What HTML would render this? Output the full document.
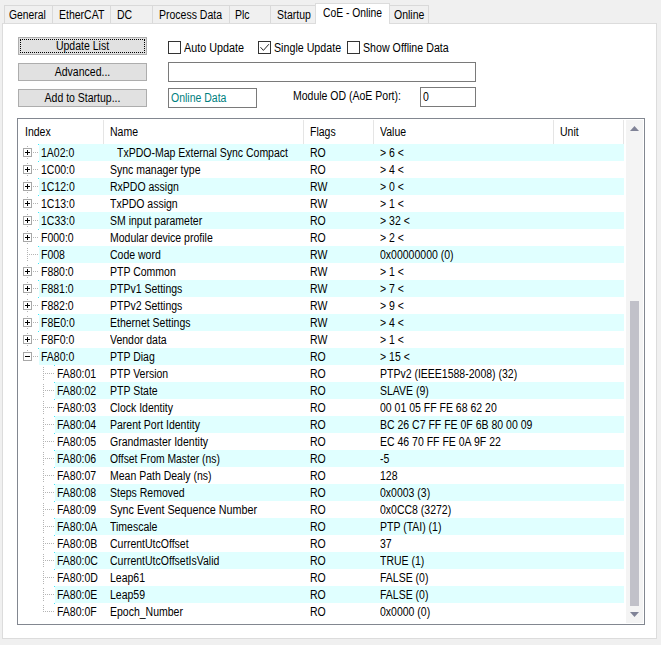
<!DOCTYPE html>
<html><head><meta charset="utf-8"><title>CoE - Online</title>
<style>
html,body{margin:0;padding:0}
body{width:661px;height:645px;background:#f0f0f0;position:relative;overflow:hidden;font-family:"Liberation Sans",sans-serif;font-size:12px;color:#000}
.t{position:absolute;white-space:nowrap;line-height:14px;font-size:12px;transform:scaleX(0.875);transform-origin:0 0}
.panel{position:absolute;left:2px;top:23px;width:655px;height:616px;background:#fff;border:1px solid #dcdcdc;box-sizing:border-box}
.tab{position:absolute;top:5px;height:18px;box-sizing:border-box;background:#f0f0f0;border:1px solid #d9d9d9;border-bottom:none}
.tab.sel{top:3px;height:21px;background:#fff;border-color:#dcdcdc}
.btn{position:absolute;left:18px;width:129px;height:18px;box-sizing:border-box;background:#e1e1e1;border:1px solid #adadad}
.btn span{position:absolute;left:0;right:0;top:1px;text-align:center;line-height:14px;font-size:12px;transform:scaleX(0.875);transform-origin:50% 0;white-space:nowrap}
.cb{position:absolute;top:41px;width:13px;height:13px;box-sizing:border-box;border:1px solid #333;background:#fff}
.inp{position:absolute;box-sizing:border-box;border:1px solid #7a7a7a;background:#fff}
.tbl{position:absolute;left:17px;top:118px;width:628px;height:507px;box-sizing:border-box;border:1px solid #828790;background:#fff}
.cy{position:absolute;height:17px;background:#e0ffff}
.dot{position:absolute;width:1px;height:1px;background:#40e8f8}
.hl{position:absolute;height:1px;background-image:repeating-linear-gradient(90deg,#b4b4b4 0 1px,transparent 1px 2px)}
.vl{position:absolute;width:1px;background-image:repeating-linear-gradient(180deg,#b4b4b4 0 1px,transparent 1px 2px)}
.bx{position:absolute;width:9px;height:9px;box-sizing:border-box;border:1px solid #a8a8a8;background:#fff}
.bx .h{position:absolute;left:1px;top:3px;width:5px;height:1px;background:#000}
.bx .v{position:absolute;left:3px;top:1px;width:1px;height:5px;background:#000}
.sep{position:absolute;top:120px;width:1px;height:24px;background:#e5e5e5}
</style></head><body>
<div class="panel"></div>
<div class="tab" style="left:4px;width:49px"></div>
<div class="tab" style="left:52px;width:59px"></div>
<div class="tab" style="left:110px;width:43px"></div>
<div class="tab" style="left:152px;width:78px"></div>
<div class="tab" style="left:229px;width:42px"></div>
<div class="tab" style="left:270px;width:47px"></div>
<div class="tab" style="left:389px;width:40px"></div>
<div class="tab sel" style="left:315px;width:75px"></div>
<span class="t" style="left:9.2px;top:8px;transform:scaleX(0.86)">General</span>
<span class="t" style="left:59px;top:8px">EtherCAT</span>
<span class="t" style="left:117px;top:8px">DC</span>
<span class="t" style="left:159px;top:8px">Process Data</span>
<span class="t" style="left:235.3px;top:8px">Plc</span>
<span class="t" style="left:277px;top:8px">Startup</span>
<span class="t" style="left:322.5px;top:6px;transform:scaleX(0.86)">CoE - Online</span>
<span class="t" style="left:394px;top:8px">Online</span>

<div class="btn" style="top:37px"><div style="position:absolute;left:1px;top:1px;right:1px;bottom:1px;border:1px dotted #000"></div><span>Update List</span></div>
<div class="btn" style="top:63px"><span>Advanced...</span></div>
<div class="btn" style="top:89px"><span>Add to Startup...</span></div>

<div class="cb" style="left:168px"></div><span class="t" style="left:184px;top:41px;transform:scaleX(0.9)">Auto Update</span>
<div class="cb" style="left:258px"><svg width="11" height="11" viewBox="0 0 11 11" style="position:absolute;left:0;top:0"><path d="M1.5 5.2 L4.4 8.4 L9.9 2.2" fill="none" stroke="#1a1a1a" stroke-width="0.95"/></svg></div><span class="t" style="left:274px;top:41px;transform:scaleX(0.89)">Single Update</span>
<div class="cb" style="left:347px"></div><span class="t" style="left:363px;top:41px;transform:scaleX(0.888)">Show Offline Data</span>

<div class="inp" style="left:168px;top:62px;width:308px;height:20px"></div>
<div class="inp" style="left:168px;top:88px;width:89px;height:20px"></div>
<span class="t" style="left:170.6px;top:91px;color:#008080">Online Data</span>
<span class="t" style="left:293px;top:89px">Module OD (AoE Port):</span>
<div class="inp" style="left:420px;top:87px;width:56px;height:20px"></div>
<span class="t" style="left:423px;top:90px">0</span>

<div class="tbl"></div>
<div class="sep" style="left:103px"></div>
<div class="sep" style="left:303px"></div>
<div class="sep" style="left:373px"></div>
<div class="sep" style="left:553px"></div>
<div class="sep" style="left:623px"></div>
<span class="t" style="left:25px;top:125px">Index</span>
<span class="t" style="left:110px;top:125px">Name</span>
<span class="t" style="left:310px;top:125px">Flags</span>
<span class="t" style="left:380px;top:125px">Value</span>
<span class="t" style="left:560px;top:125px">Unit</span>
<div class="vl" style="left:27px;top:146px;height:13px"></div>
<div class="vl" style="left:27px;top:163px;height:13px"></div>
<div class="vl" style="left:27px;top:180px;height:13px"></div>
<div class="vl" style="left:27px;top:197px;height:13px"></div>
<div class="vl" style="left:27px;top:214px;height:13px"></div>
<div class="vl" style="left:27px;top:231px;height:13px"></div>
<div class="vl" style="left:27px;top:248px;height:13px"></div>
<div class="vl" style="left:27px;top:265px;height:13px"></div>
<div class="vl" style="left:27px;top:282px;height:13px"></div>
<div class="vl" style="left:27px;top:299px;height:13px"></div>
<div class="vl" style="left:27px;top:316px;height:13px"></div>
<div class="vl" style="left:27px;top:333px;height:13px"></div>
<div class="vl" style="left:27px;top:350px;height:7px"></div>
<div class="vl" style="left:43px;top:367px;height:13px"></div>
<div class="vl" style="left:43px;top:384px;height:13px"></div>
<div class="vl" style="left:43px;top:401px;height:13px"></div>
<div class="vl" style="left:43px;top:418px;height:13px"></div>
<div class="vl" style="left:43px;top:435px;height:13px"></div>
<div class="vl" style="left:43px;top:452px;height:13px"></div>
<div class="vl" style="left:43px;top:469px;height:13px"></div>
<div class="vl" style="left:43px;top:486px;height:13px"></div>
<div class="vl" style="left:43px;top:503px;height:13px"></div>
<div class="vl" style="left:43px;top:520px;height:13px"></div>
<div class="vl" style="left:43px;top:537px;height:13px"></div>
<div class="vl" style="left:43px;top:554px;height:13px"></div>
<div class="vl" style="left:43px;top:571px;height:13px"></div>
<div class="vl" style="left:43px;top:588px;height:13px"></div>
<div class="vl" style="left:43px;top:605px;height:7px"></div>
<div class="cy" style="left:39px;top:144px;width:585px"></div>
<div class="dot" style="left:38px;top:144px"></div>
<div class="hl" style="left:33px;top:152px;width:6px"></div>
<div class="bx" style="left:23px;top:148px"><i class="h"></i><i class="v"></i></div>
<span class="t" style="left:41px;top:146px">1A02:0</span>
<span class="t" style="left:117px;top:146px">TxPDO-Map External Sync Compact</span>
<span class="t" style="left:310px;top:146px">RO</span>
<span class="t" style="left:380px;top:146px">&gt; 6 &lt;</span>
<div class="dot" style="left:38px;top:161px"></div>
<div class="hl" style="left:33px;top:169px;width:6px"></div>
<div class="bx" style="left:23px;top:165px"><i class="h"></i><i class="v"></i></div>
<span class="t" style="left:41px;top:163px">1C00:0</span>
<span class="t" style="left:110px;top:163px">Sync manager type</span>
<span class="t" style="left:310px;top:163px">RO</span>
<span class="t" style="left:380px;top:163px">&gt; 4 &lt;</span>
<div class="cy" style="left:39px;top:178px;width:585px"></div>
<div class="dot" style="left:38px;top:178px"></div>
<div class="hl" style="left:33px;top:186px;width:6px"></div>
<div class="bx" style="left:23px;top:182px"><i class="h"></i><i class="v"></i></div>
<span class="t" style="left:41px;top:180px">1C12:0</span>
<span class="t" style="left:110px;top:180px">RxPDO assign</span>
<span class="t" style="left:310px;top:180px">RW</span>
<span class="t" style="left:380px;top:180px">&gt; 0 &lt;</span>
<div class="dot" style="left:38px;top:195px"></div>
<div class="hl" style="left:33px;top:203px;width:6px"></div>
<div class="bx" style="left:23px;top:199px"><i class="h"></i><i class="v"></i></div>
<span class="t" style="left:41px;top:197px">1C13:0</span>
<span class="t" style="left:110px;top:197px">TxPDO assign</span>
<span class="t" style="left:310px;top:197px">RW</span>
<span class="t" style="left:380px;top:197px">&gt; 1 &lt;</span>
<div class="cy" style="left:39px;top:212px;width:585px"></div>
<div class="dot" style="left:38px;top:212px"></div>
<div class="hl" style="left:33px;top:220px;width:6px"></div>
<div class="bx" style="left:23px;top:216px"><i class="h"></i><i class="v"></i></div>
<span class="t" style="left:41px;top:214px">1C33:0</span>
<span class="t" style="left:110px;top:214px">SM input parameter</span>
<span class="t" style="left:310px;top:214px">RO</span>
<span class="t" style="left:380px;top:214px">&gt; 32 &lt;</span>
<div class="dot" style="left:38px;top:229px"></div>
<div class="hl" style="left:33px;top:237px;width:6px"></div>
<div class="bx" style="left:23px;top:233px"><i class="h"></i><i class="v"></i></div>
<span class="t" style="left:41px;top:231px">F000:0</span>
<span class="t" style="left:110px;top:231px">Modular device profile</span>
<span class="t" style="left:310px;top:231px">RO</span>
<span class="t" style="left:380px;top:231px">&gt; 2 &lt;</span>
<div class="cy" style="left:39px;top:246px;width:585px"></div>
<div class="dot" style="left:38px;top:246px"></div>
<div class="hl" style="left:29px;top:254px;width:10px"></div>
<span class="t" style="left:41px;top:248px">F008</span>
<span class="t" style="left:110px;top:248px">Code word</span>
<span class="t" style="left:310px;top:248px">RW</span>
<span class="t" style="left:380px;top:248px">0x00000000 (0)</span>
<div class="dot" style="left:38px;top:263px"></div>
<div class="hl" style="left:33px;top:271px;width:6px"></div>
<div class="bx" style="left:23px;top:267px"><i class="h"></i><i class="v"></i></div>
<span class="t" style="left:41px;top:265px">F880:0</span>
<span class="t" style="left:110px;top:265px">PTP Common</span>
<span class="t" style="left:310px;top:265px">RW</span>
<span class="t" style="left:380px;top:265px">&gt; 1 &lt;</span>
<div class="cy" style="left:39px;top:280px;width:585px"></div>
<div class="dot" style="left:38px;top:280px"></div>
<div class="hl" style="left:33px;top:288px;width:6px"></div>
<div class="bx" style="left:23px;top:284px"><i class="h"></i><i class="v"></i></div>
<span class="t" style="left:41px;top:282px">F881:0</span>
<span class="t" style="left:110px;top:282px">PTPv1 Settings</span>
<span class="t" style="left:310px;top:282px">RW</span>
<span class="t" style="left:380px;top:282px">&gt; 7 &lt;</span>
<div class="dot" style="left:38px;top:297px"></div>
<div class="hl" style="left:33px;top:305px;width:6px"></div>
<div class="bx" style="left:23px;top:301px"><i class="h"></i><i class="v"></i></div>
<span class="t" style="left:41px;top:299px">F882:0</span>
<span class="t" style="left:110px;top:299px">PTPv2 Settings</span>
<span class="t" style="left:310px;top:299px">RW</span>
<span class="t" style="left:380px;top:299px">&gt; 9 &lt;</span>
<div class="cy" style="left:39px;top:314px;width:585px"></div>
<div class="dot" style="left:38px;top:314px"></div>
<div class="hl" style="left:33px;top:322px;width:6px"></div>
<div class="bx" style="left:23px;top:318px"><i class="h"></i><i class="v"></i></div>
<span class="t" style="left:41px;top:316px">F8E0:0</span>
<span class="t" style="left:110px;top:316px">Ethernet Settings</span>
<span class="t" style="left:310px;top:316px">RW</span>
<span class="t" style="left:380px;top:316px">&gt; 4 &lt;</span>
<div class="dot" style="left:38px;top:331px"></div>
<div class="hl" style="left:33px;top:339px;width:6px"></div>
<div class="bx" style="left:23px;top:335px"><i class="h"></i><i class="v"></i></div>
<span class="t" style="left:41px;top:333px">F8F0:0</span>
<span class="t" style="left:110px;top:333px">Vendor data</span>
<span class="t" style="left:310px;top:333px">RW</span>
<span class="t" style="left:380px;top:333px">&gt; 1 &lt;</span>
<div class="cy" style="left:39px;top:348px;width:585px"></div>
<div class="dot" style="left:38px;top:348px"></div>
<div class="hl" style="left:33px;top:356px;width:6px"></div>
<div class="bx" style="left:23px;top:352px"><i class="h"></i></div>
<span class="t" style="left:41px;top:350px">FA80:0</span>
<span class="t" style="left:110px;top:350px">PTP Diag</span>
<span class="t" style="left:310px;top:350px">RO</span>
<span class="t" style="left:380px;top:350px">&gt; 15 &lt;</span>
<div class="dot" style="left:54px;top:365px"></div>
<div class="hl" style="left:45px;top:373px;width:10px"></div>
<span class="t" style="left:57px;top:367px">FA80:01</span>
<span class="t" style="left:110px;top:367px">PTP Version</span>
<span class="t" style="left:310px;top:367px">RO</span>
<span class="t" style="left:380px;top:367px">PTPv2 (IEEE1588-2008) (32)</span>
<div class="cy" style="left:55px;top:382px;width:569px"></div>
<div class="dot" style="left:54px;top:382px"></div>
<div class="hl" style="left:45px;top:390px;width:10px"></div>
<span class="t" style="left:57px;top:384px">FA80:02</span>
<span class="t" style="left:110px;top:384px">PTP State</span>
<span class="t" style="left:310px;top:384px">RO</span>
<span class="t" style="left:380px;top:384px">SLAVE (9)</span>
<div class="dot" style="left:54px;top:399px"></div>
<div class="hl" style="left:45px;top:407px;width:10px"></div>
<span class="t" style="left:57px;top:401px">FA80:03</span>
<span class="t" style="left:110px;top:401px">Clock Identity</span>
<span class="t" style="left:310px;top:401px">RO</span>
<span class="t" style="left:380px;top:401px">00 01 05 FF FE 68 62 20</span>
<div class="cy" style="left:55px;top:416px;width:569px"></div>
<div class="dot" style="left:54px;top:416px"></div>
<div class="hl" style="left:45px;top:424px;width:10px"></div>
<span class="t" style="left:57px;top:418px">FA80:04</span>
<span class="t" style="left:110px;top:418px">Parent Port Identity</span>
<span class="t" style="left:310px;top:418px">RO</span>
<span class="t" style="left:380px;top:418px">BC 26 C7 FF FE 0F 6B 80 00 09</span>
<div class="dot" style="left:54px;top:433px"></div>
<div class="hl" style="left:45px;top:441px;width:10px"></div>
<span class="t" style="left:57px;top:435px">FA80:05</span>
<span class="t" style="left:110px;top:435px">Grandmaster Identity</span>
<span class="t" style="left:310px;top:435px">RO</span>
<span class="t" style="left:380px;top:435px">EC 46 70 FF FE 0A 9F 22</span>
<div class="cy" style="left:55px;top:450px;width:569px"></div>
<div class="dot" style="left:54px;top:450px"></div>
<div class="hl" style="left:45px;top:458px;width:10px"></div>
<span class="t" style="left:57px;top:452px">FA80:06</span>
<span class="t" style="left:110px;top:452px;transform:scaleX(0.864)">Offset From Master (ns)</span>
<span class="t" style="left:310px;top:452px">RO</span>
<span class="t" style="left:380px;top:452px">-5</span>
<div class="dot" style="left:54px;top:467px"></div>
<div class="hl" style="left:45px;top:475px;width:10px"></div>
<span class="t" style="left:57px;top:469px">FA80:07</span>
<span class="t" style="left:110px;top:469px">Mean Path Dealy (ns)</span>
<span class="t" style="left:310px;top:469px">RO</span>
<span class="t" style="left:380px;top:469px">128</span>
<div class="cy" style="left:55px;top:484px;width:569px"></div>
<div class="dot" style="left:54px;top:484px"></div>
<div class="hl" style="left:45px;top:492px;width:10px"></div>
<span class="t" style="left:57px;top:486px">FA80:08</span>
<span class="t" style="left:110px;top:486px">Steps Removed</span>
<span class="t" style="left:310px;top:486px">RO</span>
<span class="t" style="left:380px;top:486px">0x0003 (3)</span>
<div class="dot" style="left:54px;top:501px"></div>
<div class="hl" style="left:45px;top:509px;width:10px"></div>
<span class="t" style="left:57px;top:503px">FA80:09</span>
<span class="t" style="left:110px;top:503px;transform:scaleX(0.8965)">Sync Event Sequence Number</span>
<span class="t" style="left:310px;top:503px">RO</span>
<span class="t" style="left:380px;top:503px">0x0CC8 (3272)</span>
<div class="cy" style="left:55px;top:518px;width:569px"></div>
<div class="dot" style="left:54px;top:518px"></div>
<div class="hl" style="left:45px;top:526px;width:10px"></div>
<span class="t" style="left:57px;top:520px">FA80:0A</span>
<span class="t" style="left:110px;top:520px">Timescale</span>
<span class="t" style="left:310px;top:520px">RO</span>
<span class="t" style="left:380px;top:520px">PTP (TAI) (1)</span>
<div class="dot" style="left:54px;top:535px"></div>
<div class="hl" style="left:45px;top:543px;width:10px"></div>
<span class="t" style="left:57px;top:537px">FA80:0B</span>
<span class="t" style="left:110px;top:537px">CurrentUtcOffset</span>
<span class="t" style="left:310px;top:537px">RO</span>
<span class="t" style="left:380px;top:537px">37</span>
<div class="cy" style="left:55px;top:552px;width:569px"></div>
<div class="dot" style="left:54px;top:552px"></div>
<div class="hl" style="left:45px;top:560px;width:10px"></div>
<span class="t" style="left:57px;top:554px">FA80:0C</span>
<span class="t" style="left:110px;top:554px">CurrentUtcOffsetIsValid</span>
<span class="t" style="left:310px;top:554px">RO</span>
<span class="t" style="left:380px;top:554px">TRUE (1)</span>
<div class="dot" style="left:54px;top:569px"></div>
<div class="hl" style="left:45px;top:577px;width:10px"></div>
<span class="t" style="left:57px;top:571px">FA80:0D</span>
<span class="t" style="left:110px;top:571px">Leap61</span>
<span class="t" style="left:310px;top:571px">RO</span>
<span class="t" style="left:380px;top:571px">FALSE (0)</span>
<div class="cy" style="left:55px;top:586px;width:569px"></div>
<div class="dot" style="left:54px;top:586px"></div>
<div class="hl" style="left:45px;top:594px;width:10px"></div>
<span class="t" style="left:57px;top:588px">FA80:0E</span>
<span class="t" style="left:110px;top:588px">Leap59</span>
<span class="t" style="left:310px;top:588px">RO</span>
<span class="t" style="left:380px;top:588px">FALSE (0)</span>
<div class="dot" style="left:54px;top:603px"></div>
<div class="hl" style="left:45px;top:611px;width:10px"></div>
<span class="t" style="left:57px;top:605px">FA80:0F</span>
<span class="t" style="left:110px;top:605px">Epoch_Number</span>
<span class="t" style="left:310px;top:605px">RO</span>
<span class="t" style="left:380px;top:605px">0x0000 (0)</span>
<!-- scrollbar -->
<div style="position:absolute;left:626px;top:120px;width:17px;height:503px;background:#f4f4f4"></div>
<div style="position:absolute;left:630px;top:301px;width:9px;height:305px;background:#c1c1c9"></div>
<svg style="position:absolute;left:630px;top:126px" width="9" height="5" viewBox="0 0 9 5"><path d="M0 5 L4.5 0 L9 5 Z" fill="#808397"/></svg>
<svg style="position:absolute;left:630px;top:612px" width="9" height="5" viewBox="0 0 9 5"><path d="M0 0 L4.5 5 L9 0 Z" fill="#808397"/></svg>
</body></html>
